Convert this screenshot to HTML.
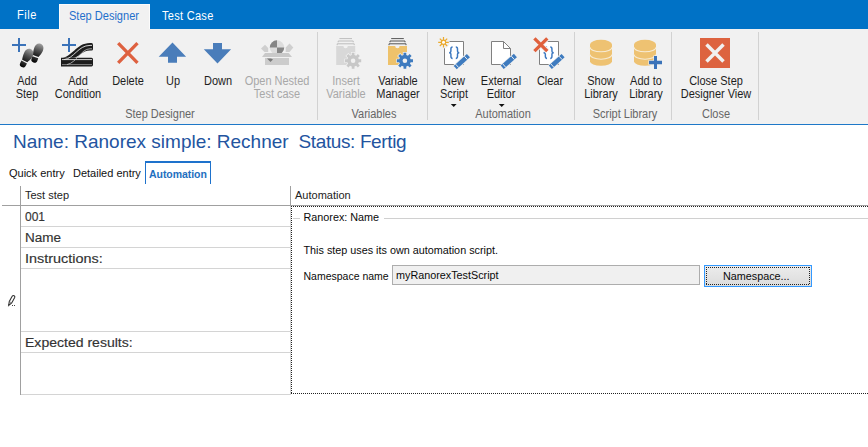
<!DOCTYPE html>
<html><head><meta charset="utf-8">
<style>
*{margin:0;padding:0;box-sizing:border-box}
html,body{width:868px;height:447px;overflow:hidden;background:#fff;font-family:"Liberation Sans",sans-serif;position:relative}
.a{position:absolute;white-space:nowrap}
#bar{left:0;top:0;width:868px;height:29px;background:#0072c6}
#tabsel{left:59px;top:4px;width:91px;height:25px;background:#f1f1f1;border:1px solid #fbfbfb;border-bottom:none}
.tt{font-size:12px;line-height:13px;color:#fff;transform:scaleX(0.92);transform-origin:0 0}
#ribbon{left:0;top:29px;width:868px;height:95px;background:#f1f1f1}
#rline{left:0;top:124px;width:868px;height:1px;background:#1e78c8}
.sep{top:32px;width:1px;height:88px;background:#d2d2d2}
.lb{font-size:12px;line-height:13px;color:#1e1e1e;text-align:center;width:100px;margin-left:-50px;transform:scaleX(0.915)}
.dis{color:#a8a8a8}
.gl{font-size:12px;line-height:13px;color:#666;text-align:center;width:120px;margin-left:-60px;transform:scaleX(0.915)}
svg{position:absolute;left:0;top:0}
.cell{font-size:12px;line-height:16px;color:#333;transform-origin:0 0;-webkit-text-stroke:0.15px #333}
.ttl{font-size:19px;line-height:22px;color:#2354a0}
.dh{background:repeating-linear-gradient(90deg,#222 0 1px,transparent 1px 2px)}
.dv{background:repeating-linear-gradient(180deg,#222 0 1px,transparent 1px 2px)}
.sm{font-size:10.8px;line-height:13px;color:#0a0a0a}
</style></head><body>
<div class="a" id="bar"></div>
<div class="a" id="tabsel"></div>
<div class="a tt" style="left:17px;top:9px;letter-spacing:0.6px">File</div>
<div class="a tt" style="left:69px;top:10px;color:#1f6fcc">Step Designer</div>
<div class="a tt" style="left:162px;top:10px;letter-spacing:0.3px">Test Case</div>
<div class="a" id="ribbon"></div>
<div class="a" id="rline"></div>

<div class="a sep" style="left:317px"></div>
<div class="a sep" style="left:427px"></div>
<div class="a sep" style="left:574px"></div>
<div class="a sep" style="left:671px"></div>
<div class="a sep" style="left:758px"></div>

<!-- labels -->
<div class="a lb" style="left:26.5px;top:75px">Add<br>Step</div>
<div class="a lb" style="left:78px;top:75px">Add<br>Condition</div>
<div class="a lb" style="left:128.2px;top:75px">Delete</div>
<div class="a lb" style="left:173.2px;top:75px">Up</div>
<div class="a lb" style="left:218px;top:75px">Down</div>
<div class="a lb dis" style="left:277.4px;top:75px">Open Nested<br>Test case</div>
<div class="a lb dis" style="left:346px;top:75px">Insert<br>Variable</div>
<div class="a lb" style="left:397.8px;top:75px">Variable<br>Manager</div>
<div class="a lb" style="left:454px;top:75px">New<br>Script</div>
<div class="a lb" style="left:501.2px;top:75px">External<br>Editor</div>
<div class="a lb" style="left:549.5px;top:75px">Clear</div>
<div class="a lb" style="left:600.7px;top:75px">Show<br>Library</div>
<div class="a lb" style="left:645.7px;top:75px">Add to<br>Library</div>
<div class="a lb" style="left:715.8px;top:75px">Close Step<br>Designer View</div>

<div class="a gl" style="left:160px;top:108px">Step Designer</div>
<div class="a gl" style="left:374.2px;top:108px">Variables</div>
<div class="a gl" style="left:502.5px;top:108px">Automation</div>
<div class="a gl" style="left:624.7px;top:108px">Script Library</div>
<div class="a gl" style="left:716.3px;top:108px">Close</div>


<!-- content -->
<div class="a ttl" style="left:13px;top:131px">Name: Ranorex simple: Rechner</div>
<div class="a ttl" style="left:298.5px;top:131px;letter-spacing:-0.38px">Status: Fertig</div>
<div class="a" style="left:9px;top:167px;font-size:11px;line-height:13px;color:#111">Quick entry</div>
<div class="a" style="left:73px;top:167px;font-size:11px;line-height:13px;color:#111">Detailed entry</div>
<div class="a" style="left:145px;top:161px;width:66px;height:23px;border:1px solid #1e72cc;border-top:2px solid #1e72cc;border-bottom:none;background:#fff"></div>
<div class="a" style="left:149px;top:167.5px;font-size:10.5px;line-height:13px;color:#1e6fc0;font-weight:bold;letter-spacing:-0.05px">Automation</div>

<!-- grid -->
<div class="a" style="left:20px;top:186px;width:1px;height:209px;background:#a0a0a0"></div>
<div class="a" style="left:2px;top:205px;width:866px;height:1px;background:#a0a0a0"></div>
<div class="a" style="left:290px;top:186px;width:1px;height:20px;background:#a0a0a0"></div>
<div class="a" style="left:25px;top:189px;font-size:11px;line-height:13px;color:#222">Test step</div>
<div class="a" style="left:295px;top:189px;font-size:11px;line-height:13px;color:#222">Automation</div>
<div class="a" style="left:21px;top:226px;width:269px;height:1px;background:#d4d4d4"></div>
<div class="a" style="left:21px;top:247px;width:269px;height:1px;background:#d4d4d4"></div>
<div class="a" style="left:21px;top:268px;width:269px;height:1px;background:#d4d4d4"></div>
<div class="a" style="left:21px;top:331px;width:269px;height:1px;background:#d4d4d4"></div>
<div class="a" style="left:21px;top:352px;width:269px;height:1px;background:#d4d4d4"></div>
<div class="a" style="left:21px;top:394px;width:270px;height:1px;background:#d4d4d4"></div>
<div class="a" style="left:290px;top:206px;width:1px;height:188px;background:#d4d4d4"></div>
<div class="a cell" style="left:25px;top:209px;transform:scaleX(1.0)">001</div>
<div class="a cell" style="left:25px;top:230px;transform:scaleX(1.125)">Name</div>
<div class="a cell" style="left:25px;top:251px;transform:scaleX(1.2)">Instructions:</div>
<div class="a cell" style="left:25px;top:335px;transform:scaleX(1.17)">Expected results:</div>

<svg width="24" height="320" style="left:0;top:0"><path d="M8.7 305.4L9.3 301.5L12.3 296.1A1.4 1.4 0 0 1 14.7 297.5L11.7 302.9Z" stroke="#333" stroke-width="1.1" fill="none"/><path d="M9.5 301.7L11.4 302.8" stroke="#666" stroke-width="0.8"/><rect x="12" y="305" width="1" height="1" fill="#444"/><rect x="14" y="305" width="1" height="1" fill="#444"/></svg>
<!-- dotted automation panel -->
<div class="a dh" style="left:291px;top:206px;width:577px;height:1px"></div>
<div class="a dh" style="left:291px;top:393px;width:577px;height:1px"></div>
<div class="a dv" style="left:291px;top:206px;width:1px;height:188px"></div>
<div class="a" style="left:293px;top:218px;width:7px;height:1px;background:#d0d0d0"></div>
<div class="a" style="left:384px;top:218px;width:484px;height:1px;background:#d0d0d0"></div>
<div class="a sm" style="left:303.5px;top:211px">Ranorex: Name</div>
<div class="a sm" style="left:303.5px;top:244px">This step uses its own automation script.</div>
<div class="a sm" style="left:303.5px;top:270px;font-size:10.5px">Namespace name</div>
<div class="a" style="left:392px;top:265px;width:308px;height:20px;background:#f0f0f0;border:1px solid #adadad"></div>
<div class="a sm" style="left:396px;top:269px">myRanorexTestScript</div>
<div class="a" style="left:704px;top:265px;width:108px;height:22px;border:1px solid #3399ff;background:linear-gradient(#ececec,#dcdcdc)"></div>
<div class="a dh" style="left:706px;top:267px;width:104px;height:1px"></div>
<div class="a dh" style="left:706px;top:284px;width:104px;height:1px"></div>
<div class="a dv" style="left:706px;top:267px;width:1px;height:18px"></div>
<div class="a dv" style="left:809px;top:267px;width:1px;height:18px"></div>
<div class="a sm" style="left:723px;top:270px">Namespace...</div>

<svg width="868" height="130" viewBox="0 0 868 130">
 <!-- dropdown arrows -->
 <path d="M450.8 104h5.8l-2.9 3z" fill="#111"/>
 <path d="M498.8 104h5.8l-2.9 3z" fill="#111"/>
 <!-- Add Step -->
 <rect x="12" y="44" width="14" height="2" fill="#3b73b9"/>
 <rect x="18" y="38" width="2" height="14" fill="#3b73b9"/>
 <!-- Add Condition -->
 <rect x="62" y="44" width="14" height="2" fill="#3b73b9"/>
 <rect x="68" y="38" width="2" height="14" fill="#3b73b9"/>
 <!-- Delete -->
 <path d="M118.2 43.1L137.5 62.8M137.5 43.1L118.2 62.8" stroke="#de6140" stroke-width="3.3"/>
 <!-- Up -->
 <path d="M172.5 42.4L186.1 56.8H177V62.8H168V56.8H158.7Z" fill="#4a7dba"/>
 <!-- Down -->
 <path d="M213 43H222V49.3H231.1L217.5 63.4L203.8 49.3H213Z" fill="#4a7dba"/>

 <defs>
  <linearGradient id="shoe" x1="0" y1="0" x2="0" y2="1"><stop offset="0" stop-color="#a0a0a0"/><stop offset="0.55" stop-color="#505050"/><stop offset="1" stop-color="#1a1a1a"/></linearGradient>
  <linearGradient id="heel" x1="0" y1="0" x2="0" y2="1"><stop offset="0" stop-color="#333"/><stop offset="1" stop-color="#000"/></linearGradient>
 </defs>
 <!-- footprints -->
 <g transform="translate(28 55.2) rotate(27)"><path d="M0 -6.6C3.2 -6.6 4.8 -3.8 4.6 -0.6C4.4 2.6 3 5.2 2.6 6.6H-3.2C-3.6 5 -4.6 2.6 -4.6 -0.8C-4.6 -4 -3 -6.6 0 -6.6Z" fill="url(#shoe)"/><path d="M-3.4 7.8H2.8V10.4C2.8 12.6 1.6 13.4 -0.3 13.4C-2.2 13.4 -3.4 12.6 -3.4 10.4Z" fill="url(#heel)"/></g>
 <g transform="translate(38.3 50) rotate(20)"><path d="M0 -6.6C3.2 -6.6 4.8 -3.8 4.6 -0.6C4.4 2.6 3 5.2 2.6 6.6H-3.2C-3.6 5 -4.6 2.6 -4.6 -0.8C-4.6 -4 -3 -6.6 0 -6.6Z" fill="url(#shoe)"/><path d="M-3.4 7.8H2.8V10.4C2.8 12.6 1.6 13.4 -0.3 13.4C-2.2 13.4 -3.4 12.6 -3.4 10.4Z" fill="url(#heel)"/></g>
 <!-- track -->
 <path d="M61 57.8H91.5Q93 57.8 93 59.5V64.8Q93 66.5 91.5 66.5H61Z" fill="#1c1c1c"/>
 <path d="M61 57.8C72 57.8 76 43 90 43H91.5Q93 43 93 45V49Q93 50.6 91.5 50.6H90C82 50.6 79 57.8 73 57.8Z" fill="#1c1c1c"/>
 <path d="M62 59.6H92" stroke="#e6e6e6" stroke-width="0.9"/>
 <path d="M62 64.6H92" stroke="#9c9c9c" stroke-width="0.8"/>
 <path d="M64 59.6C74 58.6 78 45.4 90 45.4H92" stroke="#e6e6e6" stroke-width="0.9" fill="none"/>
 <path d="M67 64.6C77 62.5 81 48.8 90 48.8H92" stroke="#c4c4c4" stroke-width="0.8" fill="none"/>
 <!-- open nested (disabled) -->
 <path d="M261 48.5L265 44.8L268.2 48V52H264.5Z" fill="#cfcfcf"/>
 <path d="M293.3 47.5L289.5 43.6L285.7 47.5V52H289.5Z" fill="#cfcfcf"/>
 <clipPath id="ballclip"><rect x="260" y="38" width="40" height="15"/></clipPath>
 <g clip-path="url(#ballclip)">
  <circle cx="277" cy="47.5" r="7.2" fill="#dcdcdc"/>
  <path d="M277 47.5V40.3A7.2 7.2 0 0 0 269.8 47.5Z" fill="#858585"/>
  <path d="M277 47.5V54.7A7.2 7.2 0 0 0 284.2 47.5Z" fill="#858585"/>
 </g>
 <path d="M265 53H288.7L292 57H262Z" fill="#c9c9c9"/>
 <rect x="265" y="58" width="24" height="7" fill="#cccccc"/>
 <path d="M267 58.6H271L273 59.4L270.5 62Z" fill="#7a7a7a"/>
 <!-- insert variable (disabled) -->
 <g transform="translate(-51.8 0)">
  <path d="M391.2 38.6H403.8" stroke="#bdbdbd" stroke-width="1"/>
  <path d="M390 42.3V41H405V42.3" stroke="#bdbdbd" stroke-width="1" fill="none"/>
  <path d="M389 45.2V43.8H406V45.2" stroke="#bdbdbd" stroke-width="1" fill="none"/>
  <path d="M388 46H395.2A2.2 2.2 0 0 0 399.6 46H407V65H388Z" fill="#d8d8d8"/>
  <g transform="translate(404.9 60.75)"><path d="M5.74 -1.38 L8.08 -1.38 L8.08 1.38 L5.74 1.38 L5.03 3.08 L6.69 4.74 L4.74 6.69 L3.08 5.03 L1.38 5.74 L1.38 8.08 L-1.38 8.08 L-1.38 5.74 L-3.08 5.03 L-4.74 6.69 L-6.69 4.74 L-5.03 3.08 L-5.74 1.38 L-8.08 1.38 L-8.08 -1.38 L-5.74 -1.38 L-5.03 -3.08 L-6.69 -4.74 L-4.74 -6.69 L-3.08 -5.03 L-1.38 -5.74 L-1.38 -8.08 L1.38 -8.08 L1.38 -5.74 L3.08 -5.03 L4.74 -6.69 L6.69 -4.74 L5.03 -3.08Z" fill="#c8c8c8" stroke="#f1f1f1" stroke-width="1.4" paint-order="stroke"/><circle r="2.3" fill="#f1f1f1"/></g>
 </g>
 <!-- variable manager -->
 <path d="M391.2 38.6H403.8" stroke="#555" stroke-width="1"/>
 <path d="M390 42.3V41H405V42.3" stroke="#555" stroke-width="1" fill="none"/>
 <path d="M389 45.2V43.8H406V45.2" stroke="#555" stroke-width="1" fill="none"/>
 <path d="M388 46H395.2A2.2 2.2 0 0 0 399.6 46H407V65H388Z" fill="#eec26b"/>
 <g transform="translate(404.9 60.75)"><path d="M5.74 -1.38 L8.08 -1.38 L8.08 1.38 L5.74 1.38 L5.03 3.08 L6.69 4.74 L4.74 6.69 L3.08 5.03 L1.38 5.74 L1.38 8.08 L-1.38 8.08 L-1.38 5.74 L-3.08 5.03 L-4.74 6.69 L-6.69 4.74 L-5.03 3.08 L-5.74 1.38 L-8.08 1.38 L-8.08 -1.38 L-5.74 -1.38 L-5.03 -3.08 L-6.69 -4.74 L-4.74 -6.69 L-3.08 -5.03 L-1.38 -5.74 L-1.38 -8.08 L1.38 -8.08 L1.38 -5.74 L3.08 -5.03 L4.74 -6.69 L6.69 -4.74 L5.03 -3.08Z" fill="#3e7bbf" stroke="#f1f1f1" stroke-width="1.4" paint-order="stroke"/><circle r="2.3" fill="#f1f1f1"/></g>
 <!-- new script -->
 <path d="M444.5 41.5H463.5V64.5H444.5Z" stroke="#808080" stroke-width="1" fill="#fff"/>
 <path d="M452.60 46.9C451.20 46.9 450.90 47.6 450.90 49V51.2C450.90 52.2 450.40 52.65 449.10 52.65C450.40 52.65 450.90 53.1 450.90 54.1V56.3C450.90 57.7 451.20 58.4 452.60 58.4 M455.80 46.9C457.20 46.9 457.50 47.6 457.50 49V51.2C457.50 52.2 458.00 52.65 459.30 52.65C458.00 52.65 457.50 53.1 457.50 54.1V56.3C457.50 57.7 457.20 58.4 455.80 58.4" stroke="#3c78c0" stroke-width="1.45" fill="none"/>
 <circle cx="443.5" cy="42.3" r="6.2" fill="#f1f1f1"/>
 <g stroke="#ebaa2e" stroke-width="1.2"><path d="M443.5 37V47.6M438.2 42.3H448.8M439.8 38.6L447.2 46M447.2 38.6L439.8 46"/></g>
 <circle cx="443.5" cy="42.3" r="2.7" fill="#ebaa2e"/><circle cx="443.5" cy="42.3" r="1.5" fill="#fff"/>
 <!-- external editor -->
 <path d="M491.5 41.5H503.5L510.5 48.5V64.5H491.5Z" stroke="#808080" stroke-width="1" fill="#fff"/>
 <path d="M503.5 41.5V48.5H510.5" stroke="#808080" stroke-width="1" fill="none"/>
 <!-- clear -->
 <path d="M539.5 41.5H558.5V64.5H539.5Z" stroke="#808080" stroke-width="1" fill="#fff"/>
 <path d="M547.05 46.9C545.65 46.9 545.35 47.6 545.35 49V51.2C545.35 52.2 544.85 52.65 543.55 52.65C544.85 52.65 545.35 53.1 545.35 54.1V56.3C545.35 57.7 545.65 58.4 547.05 58.4 M550.25 46.9C551.65 46.9 551.95 47.6 551.95 49V51.2C551.95 52.2 552.45 52.65 553.75 52.65C552.45 52.65 551.95 53.1 551.95 54.1V56.3C551.95 57.7 551.65 58.4 550.25 58.4" stroke="#3c78c0" stroke-width="1.45" fill="none"/>
 <path d="M534.4 38.3L547.3 51.2M547.3 38.3L534.4 51.2" stroke="#f1f1f1" stroke-width="5.2"/>
 <path d="M534.4 38.3L547.3 51.2M547.3 38.3L534.4 51.2" stroke="#e0603c" stroke-width="3.3"/>
<g transform="translate(455.2 67.6) rotate(-42.27)">
  <path d="M0 0L0 -2.3H17.84V2.3H0Z" fill="#3e7bbf" stroke="#f1f1f1" stroke-width="1.6" paint-order="stroke"/>
  <path d="M2.6 -2.3V2.3M14.44 -2.3V2.3" stroke="#f1f1f1" stroke-width="0.9"/>
 </g><g transform="translate(502.2 67.2) rotate(-41.31)">
  <path d="M0 0L0 -2.3H17.57V2.3H0Z" fill="#3e7bbf" stroke="#f1f1f1" stroke-width="1.6" paint-order="stroke"/>
  <path d="M2.6 -2.3V2.3M14.17 -2.3V2.3" stroke="#f1f1f1" stroke-width="0.9"/>
 </g><g transform="translate(550.3 67.2) rotate(-42.18)">
  <path d="M0 0L0 -2.3H17.27V2.3H0Z" fill="#3e7bbf" stroke="#f1f1f1" stroke-width="1.6" paint-order="stroke"/>
  <path d="M2.6 -2.3V2.3M13.87 -2.3V2.3" stroke="#f1f1f1" stroke-width="0.9"/>
 </g><g fill="#eec272">
  <ellipse cx="601" cy="44.4" rx="11" ry="4.6"/>
  <path d="M590 44.4V61.199999999999996A11 4.6 0 0 0 612 61.199999999999996V44.4Z"/>
 </g>
 <path d="M590 47.199999999999996A11 4.6 0 0 0 612 47.199999999999996" stroke="#f7ecd6" stroke-width="1.1" fill="none"/>
 <path d="M590 54.599999999999994A11 4.6 0 0 0 612 54.599999999999994" stroke="#f7ecd6" stroke-width="1.1" fill="none"/><g fill="#eec272">
  <ellipse cx="645" cy="44.4" rx="11" ry="4.6"/>
  <path d="M634 44.4V61.199999999999996A11 4.6 0 0 0 656 61.199999999999996V44.4Z"/>
 </g>
 <path d="M634 47.199999999999996A11 4.6 0 0 0 656 47.199999999999996" stroke="#f7ecd6" stroke-width="1.1" fill="none"/>
 <path d="M634 54.599999999999994A11 4.6 0 0 0 656 54.599999999999994" stroke="#f7ecd6" stroke-width="1.1" fill="none"/>
 <path d="M654 56V60.8H649V64.2H654V69H657V64.2H662V60.8H657V56Z" fill="#3b73b9" stroke="#f1f1f1" stroke-width="1.2" paint-order="stroke"/>
 <!-- Close -->
 <rect x="700" y="38" width="30" height="30" fill="#dd6340"/>
 <path d="M706.5 44.5L723.5 61.5M723.5 44.5L706.5 61.5" stroke="#f1f1f1" stroke-width="3.5"/>
</svg>
</body></html>
